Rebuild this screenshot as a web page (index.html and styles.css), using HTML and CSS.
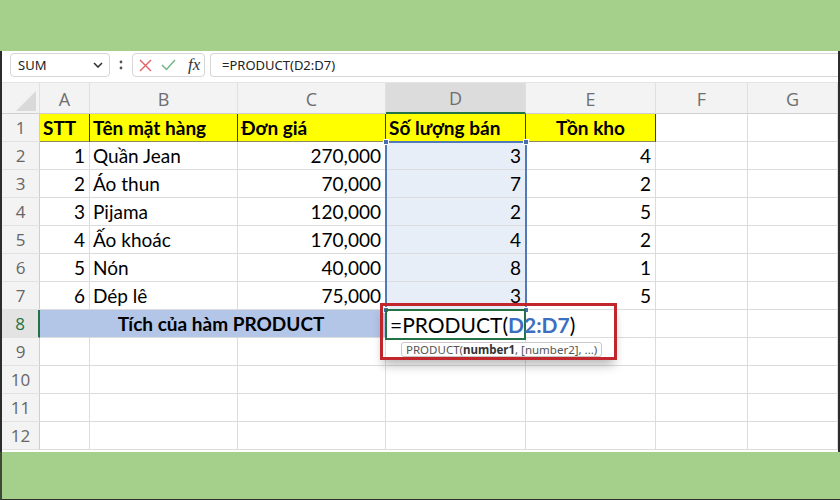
FILE: index.html
```html
<!DOCTYPE html>
<html lang="vi">
<head>
  <meta charset="UTF-8">
  <title>PRODUCT</title>
  <link rel="stylesheet" href="styles.css">
</head>
<body>
  <div class="band"></div>

  <div class="sheet">
    <div class="toolbar">
      <div class="namebox">
        <span>SUM</span>
        <svg width="10" height="6" viewBox="0 0 10 6"><path d="M1 1l4 4 4-4" fill="none" stroke="#333" stroke-width="1.6"/></svg>
      </div>
      <svg class="dots" width="6" height="14" viewBox="0 0 6 14"><circle cx="3" cy="4" r="1.4" fill="#555"/><circle cx="3" cy="10" r="1.4" fill="#555"/></svg>
      <div class="fxbox">
        <svg width="13" height="13" viewBox="0 0 13 13"><path d="M1 1l11 11M12 1L1 12" stroke="#e06161" stroke-width="1.4"/></svg>
        <svg width="15" height="12" viewBox="0 0 15 12"><path d="M1 6l4.5 4.5L14 1" fill="none" stroke="#72b586" stroke-width="1.5"/></svg>
        <span class="fx">fx</span>
      </div>
      <div class="formula">=PRODUCT(D2:D7)</div>
    </div>

    <div class="grid-wrap">
      <div class="grid">
        <!-- column headers -->
        <div class="c hd corner"></div>
        <div class="c hd">A</div>
        <div class="c hd">B</div>
        <div class="c hd">C</div>
        <div class="c hd on">D</div>
        <div class="c hd">E</div>
        <div class="c hd">F</div>
        <div class="c hd">G</div>

        <div class="c rh">1</div>
        <div class="c y">STT</div>
        <div class="c y">Tên mặt hàng</div>
        <div class="c y">Đơn giá</div>
        <div class="c y">Số lượng bán</div>
        <div class="c y mid">Tồn kho</div>
        <div class="c"></div>
        <div class="c"></div>

        <div class="c rh">2</div>
        <div class="c r">1</div>
        <div class="c">Quần Jean</div>
        <div class="c r">270,000</div>
        <div class="c r sel">3</div>
        <div class="c r">4</div>
        <div class="c"></div>
        <div class="c"></div>

        <div class="c rh">3</div>
        <div class="c r">2</div>
        <div class="c">Áo thun</div>
        <div class="c r">70,000</div>
        <div class="c r sel">7</div>
        <div class="c r">2</div>
        <div class="c"></div>
        <div class="c"></div>

        <div class="c rh">4</div>
        <div class="c r">3</div>
        <div class="c">Pijama</div>
        <div class="c r">120,000</div>
        <div class="c r sel">2</div>
        <div class="c r">5</div>
        <div class="c"></div>
        <div class="c"></div>

        <div class="c rh">5</div>
        <div class="c r">4</div>
        <div class="c">Ấo khoác</div>
        <div class="c r">170,000</div>
        <div class="c r sel">4</div>
        <div class="c r">2</div>
        <div class="c"></div>
        <div class="c"></div>

        <div class="c rh">6</div>
        <div class="c r">5</div>
        <div class="c">Nón</div>
        <div class="c r">40,000</div>
        <div class="c r sel">8</div>
        <div class="c r">1</div>
        <div class="c"></div>
        <div class="c"></div>

        <div class="c rh">7</div>
        <div class="c r">6</div>
        <div class="c">Dép lê</div>
        <div class="c r">75,000</div>
        <div class="c r sel">3</div>
        <div class="c r">5</div>
        <div class="c"></div>
        <div class="c"></div>

        <div class="c rh on">8</div>
        <div class="c total">Tích của hàm PRODUCT</div>
        <div class="c edit">=PRODUCT(<b>D2:D7</b>)</div>
        <div class="c"></div>
        <div class="c"></div>
        <div class="c"></div>

        <div class="c rh">9</div>
        <div class="c"></div><div class="c"></div><div class="c"></div><div class="c"></div><div class="c"></div><div class="c"></div><div class="c"></div>
        <div class="c rh">10</div>
        <div class="c"></div><div class="c"></div><div class="c"></div><div class="c"></div><div class="c"></div><div class="c"></div><div class="c"></div>
        <div class="c rh">11</div>
        <div class="c"></div><div class="c"></div><div class="c"></div><div class="c"></div><div class="c"></div><div class="c"></div><div class="c"></div>
        <div class="c rh">12</div>
        <div class="c"></div><div class="c"></div><div class="c"></div><div class="c"></div><div class="c"></div><div class="c"></div><div class="c"></div>
      </div>

      <!-- referenced range D2:D7 -->
      <div class="range">
        <i class="knob tl"></i><i class="knob tr"></i>
        <i class="knob bl"></i><i class="knob br"></i>
      </div>

      <div class="callout">
        <div class="tip">PRODUCT(<b>number1</b>, [number2], ...)</div>
      </div>
    </div>
  </div>

  <div class="band band-bottom"></div>
</body>
</html>
```

FILE: styles.css
```css
* {
    box-sizing: border-box;
}
body {
    margin: 0;
    width: 840px;
    height: 500px;
    overflow: hidden;
    font-family: Lato, "Noto Sans", sans-serif;
    background-color: #a4d08c;
}
.band {
    height: 51px;
    background-color: #a4d08c;
}
.band-bottom {
    height: 48px;
    border-left: 2px solid #3c4a36;
    border-bottom: 1px solid #2f2f2f;
}
.sheet {
    height: 401px;
    background-color: #fff;
    border-left: 2px solid #2c2c2c;
    border-right: 2px solid #2c2c2c;
}

/* formula bar */
.toolbar {
    height: 31px;
    display: flex;
    align-items: flex-start;
    padding: 2px 0 0 8px;
    font-family: "Noto Sans", sans-serif;
    font-size: 13px;
    color: #222;
}
.namebox {
    width: 100px;
    height: 24px;
    display: flex;
    align-items: center;
    justify-content: space-between;
    padding: 0 6px 0 7px;
    border: 1px solid #d6d6d6;
    border-radius: 4px;
}
.dots {
    margin: 5px 0 0 8px;
}
.fxbox {
    width: 73px;
    height: 24px;
    margin-left: 8px;
    display: flex;
    align-items: center;
    gap: 9px;
    padding-left: 6px;
    border: 1px solid #d6d6d6;
    border-radius: 4px;
}
.fx {
    font-family: "Liberation Serif", serif;
    font-style: italic;
    font-size: 17px;
    color: #333;
    margin-left: 3px;
}
.formula {
    flex: 1;
    height: 24px;
    margin-left: 5px;
    padding-left: 11px;
    line-height: 22px;
    border: 1px solid #d6d6d6;
    border-right: none;
    border-radius: 4px 0 0 4px;
}

/* worksheet */
.grid-wrap {
    position: relative;
}
.grid {
    display: grid;
    grid-template-columns: 38px 50px 148px 148px 140px 130px 92px 90px;
    grid-template-rows: 32px repeat(12, 28px);
}
.c {
    border-right: 1px solid #dcdcdc;
    border-bottom: 1px solid #dcdcdc;
    padding: 0 3px;
    font-size: 19px;
    line-height: 27px;
    white-space: nowrap;
    overflow: hidden;
    color: #000;
}
.r {
    text-align: right;
    padding-right: 4px;
}
.mid {
    text-align: center;
}
.hd {
    background-color: #f3f3f3;
    color: #6e6e6e;
    text-align: center;
    font-family: "Open Sans", sans-serif;
    font-size: 18px;
    line-height: 32px;
    border-top: 1px solid #e4e4e4;
    border-right-color: #e0e0e0;
    border-bottom: 1px solid #cfcfcf;
}
.hd.on {
    background-color: #dcdcdc;
    border-bottom: 2px solid #217346;
    line-height: 30px;
}
.corner {
    position: relative;
}
.corner::after {
    content: "";
    position: absolute;
    left: 14px;
    top: 8px;
    width: 20px;
    height: 20px;
    background-color: #d9d9d9;
    clip-path: polygon(100% 0, 100% 100%, 0 100%);
}
.rh {
    background-color: #f3f3f3;
    color: #666;
    text-align: center;
    font-family: "Open Sans", sans-serif;
    font-size: 17px;
    border-right-color: #cfcfcf;
    border-bottom-color: #e2e2e2;
}
.rh.on {
    color: #217346;
    background-color: #e3e3e3;
    border-right: 2px solid #217346;
}
.y {
    background-color: #ffff00;
    font-weight: 700;
    border-right: 1px solid #3a3a3a;
    border-bottom: 1px solid #8a8a5a;
}
.sel {
    background-color: #e8eef8;
}
.total {
    grid-column: span 3;
    background-color: #b4c6e7;
    text-align: center;
    font-weight: 700;
    padding-left: 20px;
    border-right-color: #b4c6e7;
}
.edit {
    position: relative;
    z-index: 2;
    overflow: visible;
    border: 2px solid #217346;
    margin: -1px 0 -2px -1px;
    padding-left: 3px;
    font-size: 21px;
    line-height: 28px;
}
.edit b {
    color: #3d6fc1;
    font-weight: 700;
}

/* range outline with corner knobs */
.range {
    position: absolute;
    left: 383px;
    top: 59px;
    width: 142px;
    height: 169px;
    border: 2px solid #5379b8;
    border-bottom: none;
    pointer-events: none;
}
.knob {
    position: absolute;
    width: 6px;
    height: 6px;
    background-color: #4a6fae;
    border: 1px solid #fff;
}
.knob.tl { left: -4px; top: -4px; }
.knob.tr { right: -4px; top: -4px; }
.knob.bl { left: -4px; bottom: -3px; }
.knob.br { right: -4px; bottom: -3px; }

/* red frame around the edited cell and its hint */
.callout {
    position: absolute;
    left: 378px;
    top: 221px;
    width: 237px;
    height: 57px;
    z-index: 3;
    border: 3px solid #c0262c;
    box-shadow: 0 8px 10px -3px rgba(0, 0, 0, 0.28);
}
.tip {
    position: absolute;
    left: 18px;
    top: 36px;
    height: 15px;
    padding: 0 4px;
    font-family: "Noto Sans", sans-serif;
    font-size: 11.5px;
    line-height: 13px;
    color: #555;
    background-color: #fff;
    border: 1px solid #c9c9c9;
    border-radius: 3px;
}
.tip b {
    color: #333;
}
```
